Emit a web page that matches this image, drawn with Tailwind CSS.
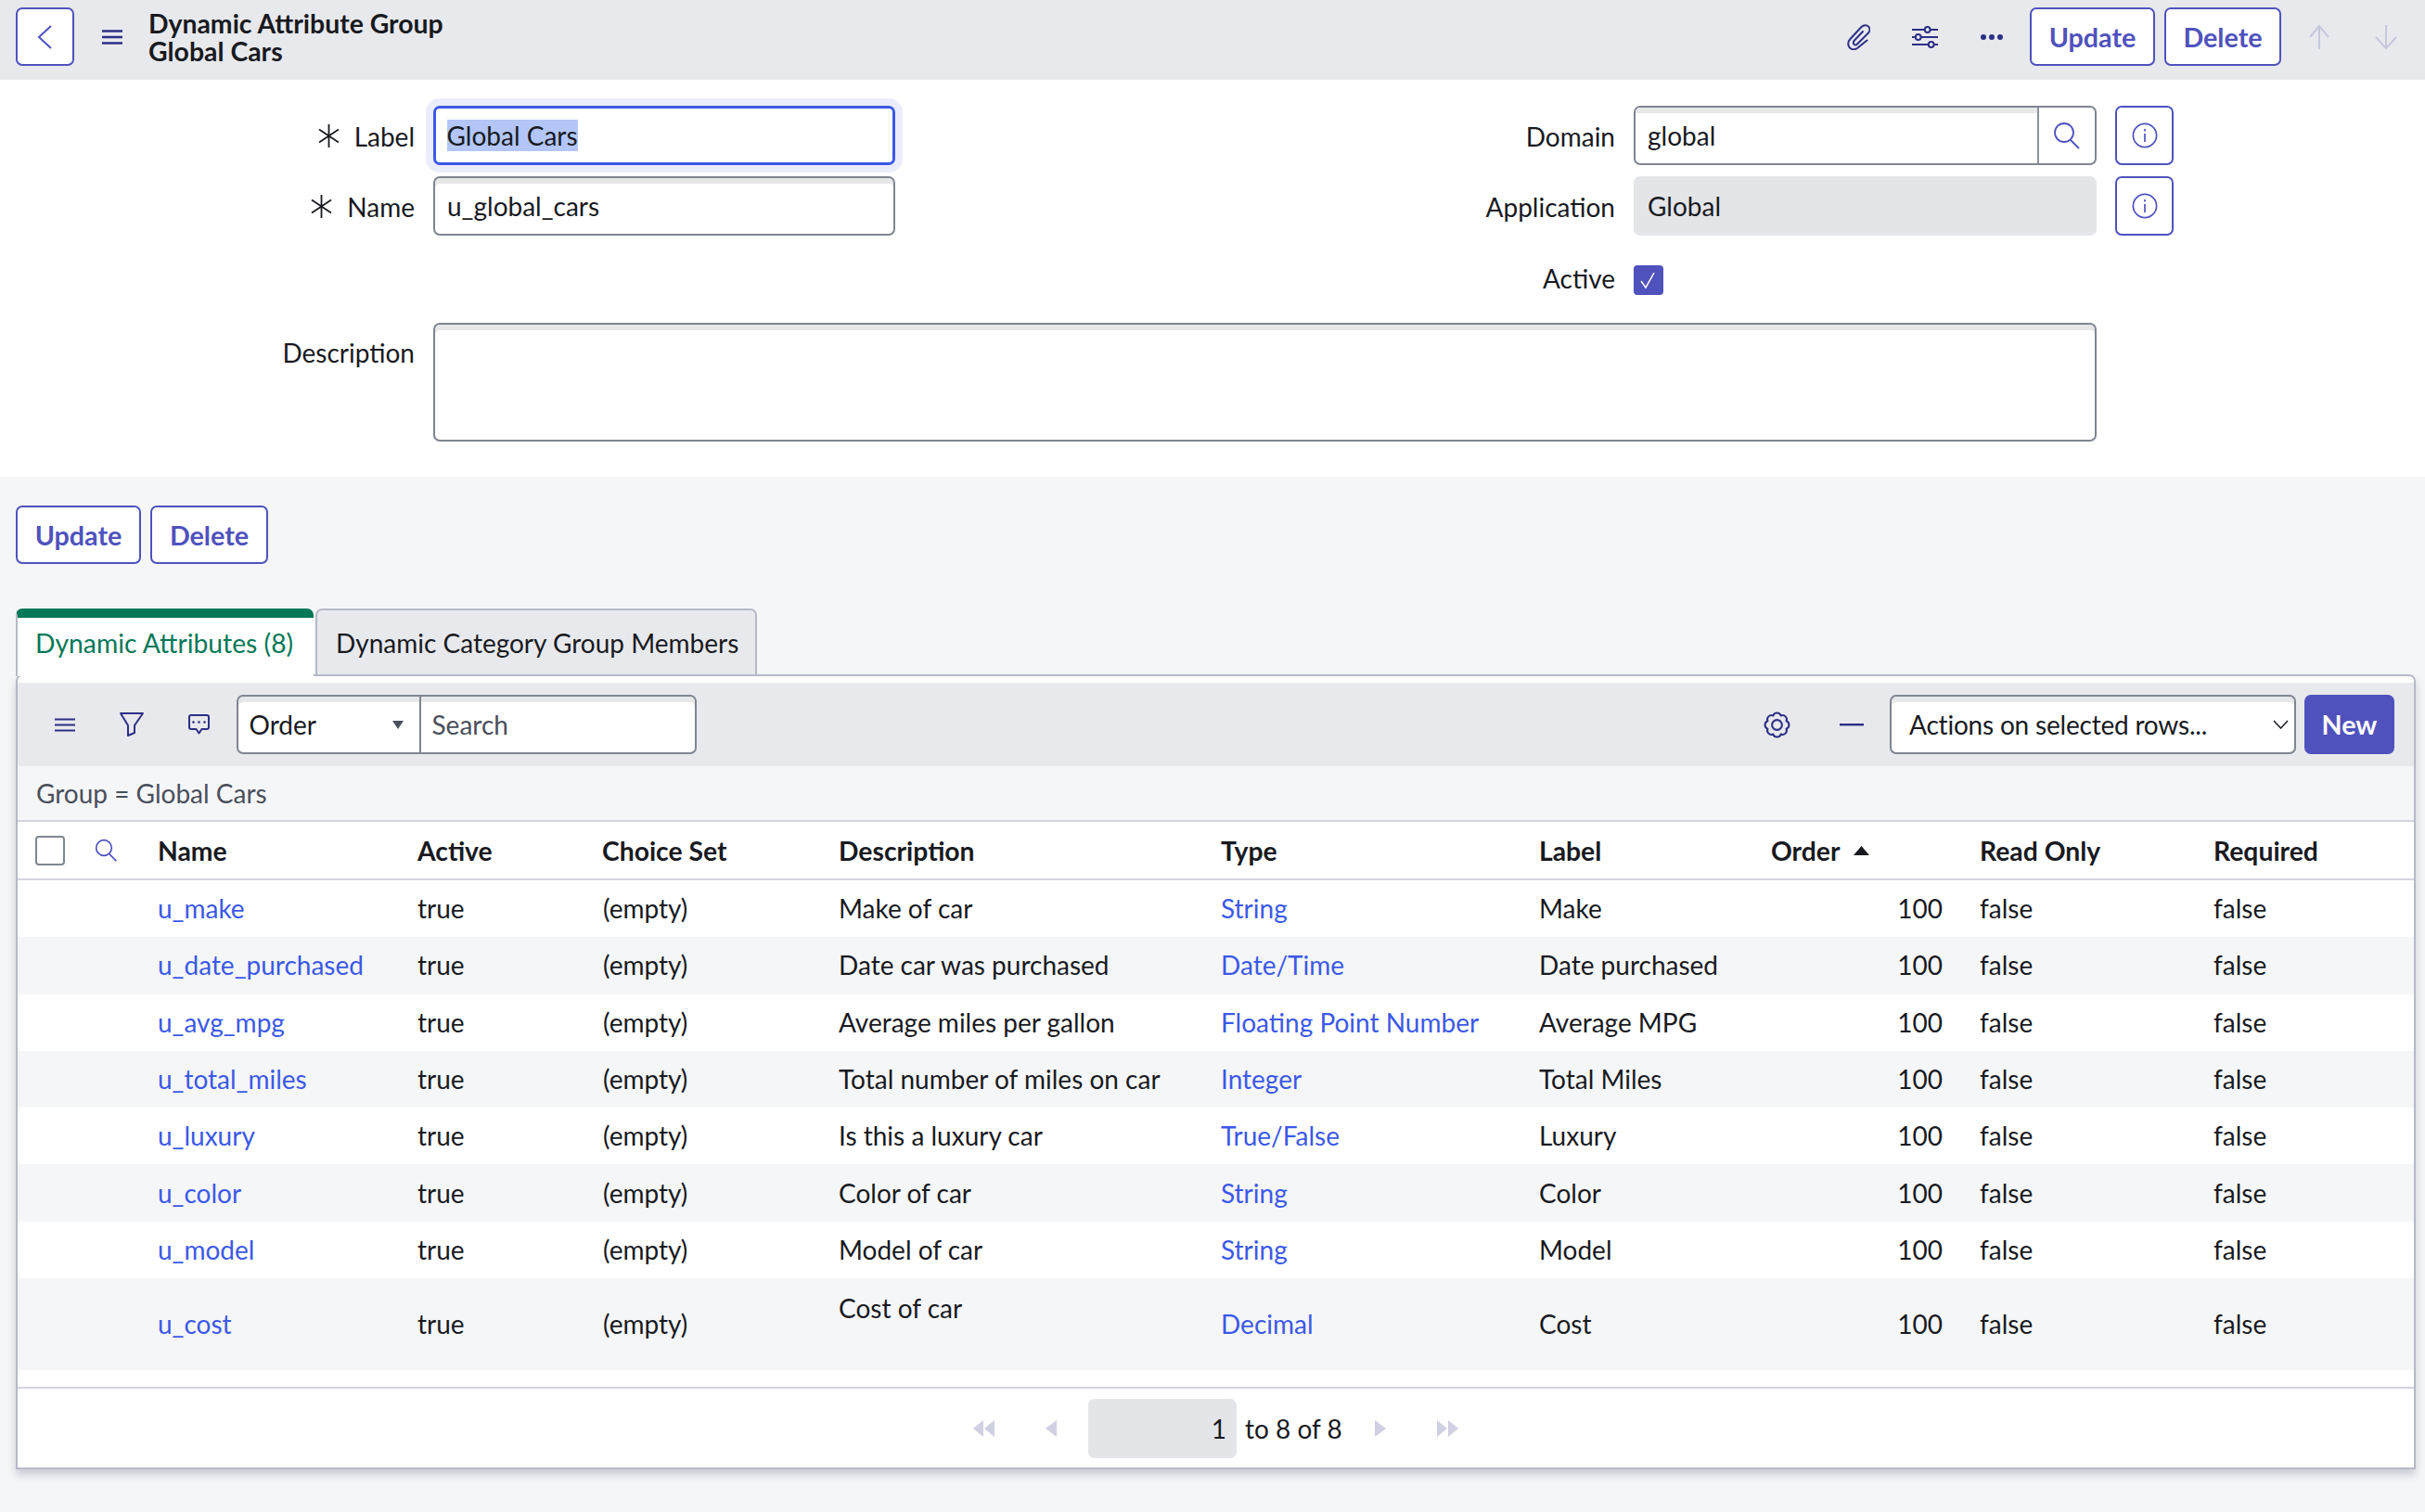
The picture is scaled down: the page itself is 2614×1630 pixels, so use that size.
<!DOCTYPE html>
<html lang="en">
<head>
<meta charset="utf-8">
<title>Dynamic Attribute Group - Global Cars</title>
<script src="https://cdn.jsdelivr.net/npm/@tailwindcss/browser@4"></script>
</head>
<body class="w-[2614px] h-[1630px] overflow-hidden bg-[#f5f6f8] font-['Lato',sans-serif] text-[28px] leading-[36px] text-[#181a1f]">

<header class="h-[86px] bg-[#e8e9ed] flex items-center pl-[17px] pr-[29px] pb-[7px]">
  <button class="w-[63px] h-[63px] bg-white border-2 border-[#4f52bd] rounded-[7px] flex items-center justify-center">
    <svg width="20" height="28" viewBox="0 0 20 28" fill="none" stroke="#4f52bd" stroke-width="2"><path d="M16 2 3 14l13 12"/></svg>
  </button>
  <svg class="ml-[30px]" width="22" height="16" viewBox="0 0 22 16" fill="none" stroke="#2e2f85" stroke-width="2.4"><path d="M0 1.5h22M0 8h22M0 14.5h22"/></svg>
  <div class="ml-[28px] font-bold text-[28.4px] leading-[30px] whitespace-nowrap"><div>Dynamic Attribute Group</div><div>Global Cars</div></div>
  <div class="ml-auto flex items-center">
    <svg width="25" height="28" viewBox="0 0 25 28" fill="none" stroke="#2e2f85" stroke-width="2" stroke-linecap="round" stroke-linejoin="round"><path d="M21.5 17.5 11 26C7 28.5 2.5 27 1.5 23 .7 20 1.500 18 3.500 16L15.500 3C18 .5 21.500 .5 23.500 3 25 5 24.500 8 22.500 10L11 21.500C9.500 23 7.500 22.500 7 21 6.500 19.500 7 18.500 8 17.500L17 8"/></svg>
    <svg class="ml-[45px]" width="28" height="24" viewBox="0 0 28 24" fill="none" stroke="#2e2f85" stroke-width="2"><path d="M0 4h28M0 12h28M0 20h28"/><circle cx="16.700" cy="4" r="2.900" fill="#e8e9ed"/><circle cx="6.700" cy="12" r="2.900" fill="#e8e9ed"/><circle cx="20.700" cy="20" r="2.900" fill="#e8e9ed"/></svg>
    <svg class="ml-[45px]" width="25" height="8" viewBox="0 0 25 8" fill="#2e2f85"><circle cx="4" cy="4" r="3"/><circle cx="13" cy="4" r="3"/><circle cx="22" cy="4" r="3"/></svg>
    <button class="ml-[29px] w-[135px] h-[63px] bg-white border-2 border-[#4f52bd] rounded-[7px] font-bold text-[28.7px] text-[#4f52bd]">Update</button>
    <button class="ml-[10px] w-[126px] h-[63px] bg-white border-2 border-[#4f52bd] rounded-[7px] font-bold text-[28.7px] text-[#4f52bd]">Delete</button>
    <svg class="ml-[29px]" width="24" height="28" viewBox="0 0 24 28" fill="none" stroke="#c5c7dc" stroke-width="2"><path d="M12 27V2M2 14 12 2l10 12"/></svg>
    <svg class="ml-[47px]" width="26" height="28" viewBox="0 0 26 28" fill="none" stroke="#c5c7dc" stroke-width="2"><path d="M13 1v25M2 14l11 12 11-12"/></svg>
  </div>
</header>

<section class="h-[428px] bg-white pt-[28px]">
  <div class="flex h-[64px] items-center">
    <div class="w-[447px] flex items-center justify-end gap-[15px]">
      <svg width="25" height="25" viewBox="0 0 25 25" fill="none" stroke="#181a1f" stroke-width="1.800"><path d="M12.500 0v25M2 5.500l21 14M23 5.500 2 19.500"/></svg>
      <span class="pt-[1px]">Label</span>
    </div>
    <div class="ml-[20px] w-[498px] h-[64px] bg-white border-[3.5px] border-[#3c59e7] rounded-[7px] ring-8 ring-[#ebedfb] flex items-center pl-[11.5px]"><span class="inline-block leading-[34px] bg-[#b3c6f7]">Global Cars</span></div>
    <div class="w-[776px] text-right pt-[1px]">Domain</div>
    <div class="ml-[20px] w-[499px] h-[64px] bg-white border-2 border-[#7f8690] rounded-[7px] flex overflow-hidden">
      <div class="flex-1 flex items-center pl-[13px] shadow-[inset_0_6px_0_#e6e7e8]">global</div>
      <div class="w-[62px] border-l-2 border-[#8c929c] flex items-center justify-center">
        <svg width="30" height="30" viewBox="0 0 30 30" fill="none" stroke="#4f52bd" stroke-width="1.800"><circle cx="12" cy="12" r="10"/><path d="m19 20 9 9"/></svg>
      </div>
    </div>
    <button class="ml-[20px] w-[63px] h-[64px] bg-white border-2 border-[#4f52bd] rounded-[7px] flex items-center justify-center">
      <svg width="28" height="28" viewBox="0 0 28 28" fill="none" stroke="#4f52bd" stroke-width="1.700"><circle cx="14" cy="14" r="12.600"/><path d="M14 12v9M14 7v2.600"/></svg>
    </button>
  </div>
  <div class="flex h-[64px] items-center mt-[12px]">
    <div class="w-[447px] flex items-center justify-end gap-[15px]">
      <svg width="25" height="25" viewBox="0 0 25 25" fill="none" stroke="#181a1f" stroke-width="1.800"><path d="M12.500 0v25M2 5.500l21 14M23 5.500 2 19.500"/></svg>
      <span class="pt-[1px]">Name</span>
    </div>
    <div class="ml-[20px] w-[498px] h-[64px] bg-white border-2 border-[#7f8690] rounded-[7px] shadow-[inset_0_6px_0_#e6e7e8] flex items-center pl-[13px]">u_global_cars</div>
    <div class="w-[776px] text-right pt-[1px]">Application</div>
    <div class="ml-[20px] w-[499px] h-[64px] bg-[#e4e5e9] rounded-[7px] flex items-center pl-[15px]">Global</div>
    <button class="ml-[20px] w-[63px] h-[64px] bg-white border-2 border-[#4f52bd] rounded-[7px] flex items-center justify-center">
      <svg width="28" height="28" viewBox="0 0 28 28" fill="none" stroke="#4f52bd" stroke-width="1.700"><circle cx="14" cy="14" r="12.600"/><path d="M14 12v9M14 7v2.600"/></svg>
    </button>
  </div>
  <div class="flex h-[32px] items-center mt-[32px]">
    <div class="w-[1741px] text-right pb-[5px]">Active</div>
    <div class="ml-[20px] w-[32px] h-[32px] bg-[#4f52bd] rounded-[4px] flex items-center justify-center">
      <svg width="20" height="20" viewBox="0 0 20 20" fill="none" stroke="#fff" stroke-width="1.500"><path d="m2 11 5 7L16 2"/></svg>
    </div>
  </div>
  <div class="flex mt-[30px]">
    <div class="w-[447px] text-right pt-[14px]">Description</div>
    <div class="ml-[20px] w-[1793px] h-[128px] bg-white border-2 border-[#7f8690] rounded-[7px] shadow-[inset_0_6px_0_#e6e7e8]"></div>
  </div>
</section>

<div class="flex pl-[17px] pt-[31px] gap-[10px]">
  <button class="w-[135px] h-[63px] bg-white border-2 border-[#4f52bd] rounded-[7px] font-bold text-[28.7px] text-[#4f52bd]">Update</button>
  <button class="w-[127px] h-[63px] bg-white border-2 border-[#4f52bd] rounded-[7px] font-bold text-[28.7px] text-[#4f52bd]">Delete</button>
</div>

<div class="flex pl-[17px] mt-[48px] h-[71px] items-stretch relative z-10">
  <div class="w-[321px] h-[73px] bg-white rounded-t-[7px] border-l-2 border-[#b6b9c6] border-t-[10px] border-t-[#047857] text-[#047857] text-[28.3px] pl-[19px] pt-[9px] whitespace-nowrap">Dynamic Attributes (8)</div>
  <div class="ml-[2px] w-[476px] bg-[#e8e9ed] rounded-t-[7px] border-2 border-b-0 border-[#b6b9c6] pl-[20px] pt-[17px] whitespace-nowrap">Dynamic Category Group Members</div>
</div>

<main class="ml-[17px] w-[2587px] h-[857px] bg-white border-2 border-[#b6b9c6] rounded-t-[7px] shadow-[0_6px_8px_rgba(120,125,145,0.35)] pt-[7px] flex flex-col">
  <div class="h-[90px] bg-[#e8e9ed] flex items-center pl-[39.5px] pr-[21px] shrink-0">
    <svg width="22" height="15" viewBox="0 0 22 15" fill="none" stroke="#2e2f85" stroke-width="2.200"><path d="M0 1.500h22M0 7.500h22M0 13.500h22"/></svg>
    <svg class="ml-[48px]" width="26" height="26" viewBox="0 0 26 26" fill="none" stroke="#2e2f85" stroke-width="2" stroke-linejoin="round"><path d="M1 1h24L16 14v8l-7 3V14z"/></svg>
    <svg class="ml-[48px]" width="23" height="22" viewBox="0 0 23 22" fill="none" stroke="#2e2f85" stroke-width="2" stroke-linejoin="round"><path d="M3 1h17a2 2 0 0 1 2 2v11a2 2 0 0 1-2 2h-5.500l-3 4.500-3-4.500H3a2 2 0 0 1-2-2V3a2 2 0 0 1 2-2z"/><circle cx="5.500" cy="8.500" r="1.300" fill="#2e2f85" stroke="none"/><circle cx="11.500" cy="8.500" r="1.300" fill="#2e2f85" stroke="none"/><circle cx="17.500" cy="8.500" r="1.300" fill="#2e2f85" stroke="none"/></svg>
    <div class="ml-[29px] w-[496px] h-[64px] bg-white border-2 border-[#7f8690] rounded-[7px] flex shadow-[inset_0_6px_0_#e6e7e8]">
      <div class="w-[195px] flex items-center pl-[12px] justify-between pr-[17px]"><span>Order</span><svg width="12" height="9" viewBox="0 0 12 9" fill="#4a4f5c"><path d="M0 0h12L6 9z"/></svg></div>
      <div class="flex-1 border-l-2 border-[#7f8690] flex items-center pl-[12px] text-[#4a4f5c]">Search</div>
    </div>
    <svg class="ml-auto" width="29" height="29" viewBox="0 0 28 28" fill="none" stroke="#2e2f85" stroke-width="2" stroke-linejoin="round"><path d="M23.700 18.020A4.300 4.300 0 0 1 18.020 23.700 4.300 4.300 0 0 1 9.980 23.700 4.300 4.300 0 0 1 4.300 18.020 4.300 4.300 0 0 1 4.300 9.980 4.300 4.300 0 0 1 9.980 4.300 4.300 4.300 0 0 1 18.020 4.300 4.300 4.300 0 0 1 23.700 9.980 4.300 4.300 0 0 1 23.700 18.020Z"/><circle cx="14" cy="14" r="5.200"/></svg>
    <svg class="ml-[53px]" width="26" height="3" viewBox="0 0 26 3" fill="#2e2f85"><rect width="26" height="2.400"/></svg>
    <div class="ml-[28px] w-[438px] h-[64px] bg-white border-2 border-[#7f8690] rounded-[7px] flex items-center justify-between pl-[19px] pr-[6px] shadow-[inset_0_6px_0_#e6e7e8]">
      <span class="tracking-[-0.2px] whitespace-nowrap">Actions on selected rows...</span>
      <svg width="17" height="10" viewBox="0 0 17 10" fill="none" stroke="#181a1f" stroke-width="1.500"><path d="m1 1 7.500 8L16 1"/></svg>
    </div>
    <button class="ml-[9px] w-[97px] h-[64px] bg-[#4f52bd] rounded-[7px] text-white font-bold text-[28.7px]">New</button>
  </div>
  <div class="h-[58px] shrink-0 border-b-2 border-[#d3d4dd] pl-[20px] flex items-center text-[#4a4f5c] bg-[#f5f6f8] box-content">Group = Global Cars</div>

  <div class="grid grid-cols-[151px_280px_199px_255px_412px_343px_250px_225px_252px_218px] h-[61px] items-center border-b-2 border-[#d3d4dd] font-bold text-[28.3px] shrink-0 box-content">
    <div class="flex items-center pl-[19px]">
      <div class="w-[32px] h-[32px] bg-white border-2 border-[#7f8690] rounded-[4px]"></div>
      <svg class="ml-[32px]" width="25" height="25" viewBox="0 0 30 30" fill="none" stroke="#4f52bd" stroke-width="2"><circle cx="12" cy="12" r="10"/><path d="m19 20 9 9"/></svg>
    </div>
    <div>Name</div><div>Active</div><div>Choice Set</div><div>Description</div><div>Type</div><div>Label</div>
    <div class="flex items-center gap-[14px]">Order <svg width="17" height="10" viewBox="0 0 17 10" fill="#181a1f"><path d="M8.500 0 17 10H0z"/></svg></div>
    <div>Read Only</div><div>Required</div>
  </div>

  <div class="grid grid-cols-[151px_280px_200px_254px_412px_343px_250px_185px_40px_252px_218px] h-[61.3px] pb-[1px] items-center shrink-0">
    <div></div><a class="text-[#3c59e7]">u_make</a><div>true</div><div>(empty)</div><div>Make of car</div><a class="text-[#3c59e7]">String</a><div>Make</div><div class="text-right">100</div><div></div><div>false</div><div>false</div>
  </div>
  <div class="grid grid-cols-[151px_280px_200px_254px_412px_343px_250px_185px_40px_252px_218px] h-[61.3px] pb-[1px] items-center shrink-0 bg-[#f5f6f8]">
    <div></div><a class="text-[#3c59e7]">u_date_purchased</a><div>true</div><div>(empty)</div><div>Date car was purchased</div><a class="text-[#3c59e7]">Date/Time</a><div>Date purchased</div><div class="text-right">100</div><div></div><div>false</div><div>false</div>
  </div>
  <div class="grid grid-cols-[151px_280px_200px_254px_412px_343px_250px_185px_40px_252px_218px] h-[61.3px] pb-[1px] items-center shrink-0">
    <div></div><a class="text-[#3c59e7]">u_avg_mpg</a><div>true</div><div>(empty)</div><div>Average miles per gallon</div><a class="text-[#3c59e7]">Floating Point Number</a><div>Average MPG</div><div class="text-right">100</div><div></div><div>false</div><div>false</div>
  </div>
  <div class="grid grid-cols-[151px_280px_200px_254px_412px_343px_250px_185px_40px_252px_218px] h-[61.3px] pb-[1px] items-center shrink-0 bg-[#f5f6f8]">
    <div></div><a class="text-[#3c59e7]">u_total_miles</a><div>true</div><div>(empty)</div><div>Total number of miles on car</div><a class="text-[#3c59e7]">Integer</a><div>Total Miles</div><div class="text-right">100</div><div></div><div>false</div><div>false</div>
  </div>
  <div class="grid grid-cols-[151px_280px_200px_254px_412px_343px_250px_185px_40px_252px_218px] h-[61.3px] pb-[1px] items-center shrink-0">
    <div></div><a class="text-[#3c59e7]">u_luxury</a><div>true</div><div>(empty)</div><div>Is this a luxury car</div><a class="text-[#3c59e7]">True/False</a><div>Luxury</div><div class="text-right">100</div><div></div><div>false</div><div>false</div>
  </div>
  <div class="grid grid-cols-[151px_280px_200px_254px_412px_343px_250px_185px_40px_252px_218px] h-[61.3px] pb-[1px] items-center shrink-0 bg-[#f5f6f8]">
    <div></div><a class="text-[#3c59e7]">u_color</a><div>true</div><div>(empty)</div><div>Color of car</div><a class="text-[#3c59e7]">String</a><div>Color</div><div class="text-right">100</div><div></div><div>false</div><div>false</div>
  </div>
  <div class="grid grid-cols-[151px_280px_200px_254px_412px_343px_250px_185px_40px_252px_218px] h-[61.3px] pb-[1px] items-center shrink-0">
    <div></div><a class="text-[#3c59e7]">u_model</a><div>true</div><div>(empty)</div><div>Model of car</div><a class="text-[#3c59e7]">String</a><div>Model</div><div class="text-right">100</div><div></div><div>false</div><div>false</div>
  </div>
  <div class="grid grid-cols-[151px_280px_200px_254px_412px_343px_250px_185px_40px_252px_218px] h-[99px] pb-[1px] items-center shrink-0 bg-[#f5f6f8]">
    <div></div><a class="text-[#3c59e7]">u_cost</a><div>true</div><div>(empty)</div><div class="self-start pt-[14px]">Cost of car</div><a class="text-[#3c59e7]">Decimal</a><div>Cost</div><div class="text-right">100</div><div></div><div>false</div><div>false</div>
  </div>

  <div class="mt-[18px] flex-1 border-t-2 border-[#d3d4dd] flex items-center justify-center">
    <svg width="23" height="18" viewBox="0 0 23 18" fill="#cfd0e2"><path d="M11 0v18L0 9zM23 0v18L12 9z"/></svg>
    <svg class="ml-[55px]" width="12" height="18" viewBox="0 0 12 18" fill="#cfd0e2"><path d="M12 0v18L0 9z"/></svg>
    <div class="ml-[34px] w-[160px] h-[64px] bg-[#e4e5e9] rounded-[7px] flex items-center justify-end pr-[11px]">1</div>
    <div class="ml-[9px] w-[104px] whitespace-nowrap">to 8 of 8</div>
    <svg class="ml-[36px]" width="12" height="18" viewBox="0 0 12 18" fill="#cfd0e2"><path d="M0 0v18L12 9z"/></svg>
    <svg class="ml-[55px]" width="23" height="18" viewBox="0 0 23 18" fill="#cfd0e2"><path d="M0 0v18L11 9zM12 0v18L23 9z"/></svg>
  </div>
</main>
</body>
</html>
